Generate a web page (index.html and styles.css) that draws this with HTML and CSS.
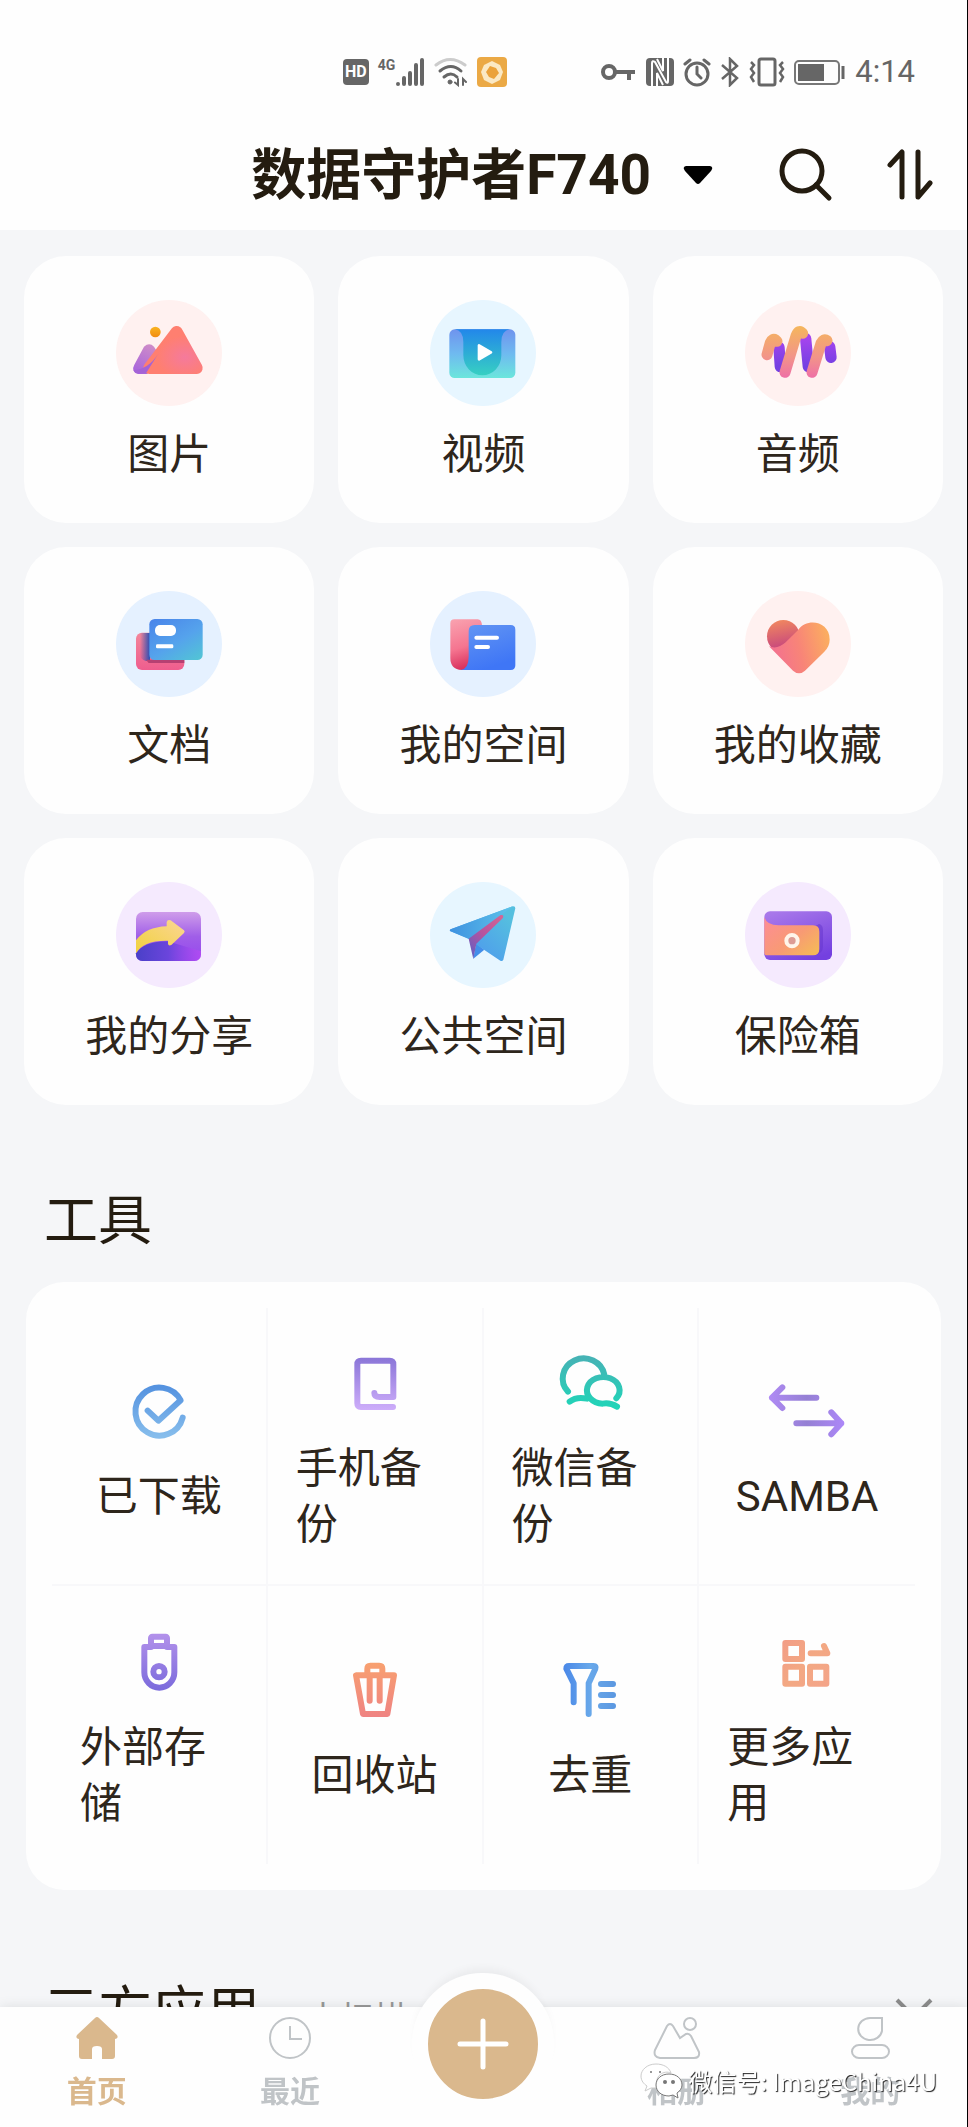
FILE: index.html
```html
<!DOCTYPE html>
<html lang="zh-CN">
<head>
  <meta charset="UTF-8">
  <meta name="viewport" content="width=device-width, initial-scale=1.0">
  <link rel="stylesheet" href="styles.css">
  <title>数据守护者F740</title>
</head>
<body>
<!-- 图标共用的渐变 -->
<svg class="defs" width="0" height="0" aria-hidden="true">
  <defs>
    <linearGradient id="g-blue" gradientUnits="userSpaceOnUse" x1="0" y1="50" x2="0" y2="195"><stop offset="0" stop-color="#5593e0"/><stop offset="1" stop-color="#86bdec"/></linearGradient>
    <linearGradient id="g-phone" gradientUnits="userSpaceOnUse" x1="0" y1="45" x2="0" y2="200"><stop offset="0" stop-color="#8b76d8"/><stop offset="1" stop-color="#cdadfa"/></linearGradient>
    <linearGradient id="g-chat" gradientUnits="userSpaceOnUse" x1="0" y1="45" x2="0" y2="200"><stop offset="0" stop-color="#45b3b5"/><stop offset="1" stop-color="#1fd6b8"/></linearGradient>
    <linearGradient id="g-samba" gradientUnits="userSpaceOnUse" x1="0" y1="0" x2="240" y2="0"><stop offset="0" stop-color="#b18bf6"/><stop offset="0.5" stop-color="#9580d4"/><stop offset="1" stop-color="#ae88fb"/></linearGradient>
    <linearGradient id="g-usb" gradientUnits="userSpaceOnUse" x1="0" y1="40" x2="0" y2="205"><stop offset="0" stop-color="#b190ea"/><stop offset="1" stop-color="#7b6bdc"/></linearGradient>
    <linearGradient id="g-trash" gradientUnits="userSpaceOnUse" x1="0" y1="40" x2="0" y2="200"><stop offset="0" stop-color="#f8a070"/><stop offset="1" stop-color="#ef8382"/></linearGradient>
    <linearGradient id="g-funnel" gradientUnits="userSpaceOnUse" x1="40" y1="0" x2="200" y2="0"><stop offset="0" stop-color="#4a88e8"/><stop offset="0.5" stop-color="#68a8ea"/><stop offset="1" stop-color="#5b97e0"/></linearGradient>
    <linearGradient id="g-apps" gradientUnits="userSpaceOnUse" x1="45" y1="60" x2="190" y2="190"><stop offset="0" stop-color="#f29d86"/><stop offset="0.5" stop-color="#f3a883"/><stop offset="1" stop-color="#f4a489"/></linearGradient>

    <radialGradient id="c-hill" cx="0.75" cy="0.7" r="0.6"><stop offset="0" stop-color="#f57a9c"/><stop offset="1" stop-color="#ff7f70"/></radialGradient>
    <linearGradient id="c-hill2" x1="0.7" y1="0" x2="0.3" y2="1"><stop offset="0" stop-color="#cf8cc8"/><stop offset="1" stop-color="#a865dc"/></linearGradient>
    <linearGradient id="c-sun" x1="0" y1="0" x2="0" y2="1"><stop offset="0" stop-color="#f9b420"/><stop offset="1" stop-color="#f18b12"/></linearGradient>
    <linearGradient id="c-film" x1="0" y1="0" x2="0" y2="1"><stop offset="0" stop-color="#6f93ee"/><stop offset="0.5" stop-color="#6fbaf0"/><stop offset="1" stop-color="#6be6dc"/></linearGradient>
    <linearGradient id="c-film2" x1="0" y1="0" x2="0" y2="1"><stop offset="0" stop-color="#2287ea"/><stop offset="1" stop-color="#37d0c2"/></linearGradient>
    <linearGradient id="c-wave" gradientUnits="userSpaceOnUse" x1="0" y1="78" x2="0" y2="234"><stop offset="0" stop-color="#f5b65c"/><stop offset="0.6" stop-color="#f29489"/><stop offset="1" stop-color="#ee6fa6"/></linearGradient>
    <linearGradient id="c-wave2" x1="0" y1="0" x2="0" y2="1"><stop offset="0" stop-color="#a544ee"/><stop offset="1" stop-color="#7340e2"/></linearGradient>
    <linearGradient id="c-doc" x1="0.1" y1="0" x2="0.9" y2="1"><stop offset="0" stop-color="#4a86ea"/><stop offset="0.55" stop-color="#55a3ec"/><stop offset="1" stop-color="#52c3d6"/></linearGradient>
    <linearGradient id="c-pink" x1="0" y1="0" x2="0" y2="1"><stop offset="0" stop-color="#f3879b"/><stop offset="1" stop-color="#ef5d8e"/></linearGradient>
    <linearGradient id="c-shade" x1="0" y1="0" x2="1" y2="0"><stop offset="0" stop-color="#2b4fa8" stop-opacity="0"/><stop offset="1" stop-color="#2850b8"/></linearGradient>
    <linearGradient id="c-folder" x1="0" y1="0" x2="0.2" y2="1"><stop offset="0" stop-color="#f9a3b0"/><stop offset="0.6" stop-color="#f57590"/><stop offset="1" stop-color="#d9335f"/></linearGradient>
    <linearGradient id="c-folder2" x1="0" y1="0" x2="0.4" y2="1"><stop offset="0" stop-color="#6396f3"/><stop offset="1" stop-color="#3f76f6"/></linearGradient>
    <linearGradient id="c-heart" x1="0" y1="0.6" x2="1" y2="0.4"><stop offset="0" stop-color="#f26f93"/><stop offset="0.5" stop-color="#f88478"/><stop offset="1" stop-color="#fbad60"/></linearGradient>
    <linearGradient id="c-heart2" x1="0.4" y1="0" x2="0.6" y2="1"><stop offset="0" stop-color="#f08660"/><stop offset="0.8" stop-color="#c94a7c"/></linearGradient>
    <linearGradient id="c-share" x1="0" y1="0" x2="0" y2="1"><stop offset="0" stop-color="#cf9dea"/><stop offset="0.5" stop-color="#a05ee8"/><stop offset="1" stop-color="#9647ee"/></linearGradient>
    <linearGradient id="c-share2" x1="0" y1="0" x2="1" y2="0"><stop offset="0" stop-color="#4a40c8"/><stop offset="0.5" stop-color="#6b45dc"/><stop offset="1" stop-color="#b94bf5" stop-opacity="0.7"/></linearGradient>
    <linearGradient id="c-arrow" x1="0" y1="1" x2="1" y2="0"><stop offset="0" stop-color="#f0d23c"/><stop offset="1" stop-color="#fbd595"/></linearGradient>
    <linearGradient id="c-wing" x1="0" y1="0" x2="1" y2="0"><stop offset="0" stop-color="#3f92e0"/><stop offset="1" stop-color="#5ec3ea"/></linearGradient>
    <linearGradient id="c-wing2" x1="0" y1="1" x2="0.9" y2="0.2"><stop offset="0" stop-color="#4b8cf2"/><stop offset="1" stop-color="#55bfdf"/></linearGradient>
    <linearGradient id="c-fold" x1="0" y1="1" x2="1" y2="0"><stop offset="0" stop-color="#5660c8"/><stop offset="0.5" stop-color="#b8539e"/><stop offset="1" stop-color="#d56594"/></linearGradient>
    <linearGradient id="c-safe" x1="0.2" y1="0" x2="0.7" y2="1"><stop offset="0" stop-color="#a878ea"/><stop offset="1" stop-color="#7440e0"/></linearGradient>
    <linearGradient id="c-safe2" x1="0" y1="0" x2="1" y2="0.8"><stop offset="0" stop-color="#fd8d96"/><stop offset="0.6" stop-color="#f89a74"/><stop offset="1" stop-color="#f5b75a"/></linearGradient>
  </defs>
</svg>

<div class="app">
  <header class="top">
    <!-- 状态栏 -->
    <div class="status">
      <div class="status-left">
        <span class="hd">HD</span>
        <span class="net">4G</span>
        <svg width="30" height="30" viewBox="0 0 30 30" stroke="#666" stroke-width="4" stroke-linecap="round"><path d="M3 27v0M9 21v6M15 16v11M21 8v19M27 3v24"/></svg>
        <svg width="34" height="30" viewBox="0 0 34 30" fill="none" stroke="#666" stroke-width="3" stroke-linecap="round"><path d="M2 8Q16-3 31 8" stroke="#ccc"/><path d="M6 14Q17 5 27 14M10 20Q17 14 23 20"/><circle cx="16" cy="25" r="2" fill="#666" stroke-width="1"/><path d="M24 22v6l-3-2.500M29 28v-6l3 3" stroke-width="2"/></svg>
        <svg width="30" height="30" viewBox="0 0 30 30"><rect width="30" height="30" rx="4" fill="#eba945"/><path d="M15 4l8 4 3 7-3 8-8 4-8-4-3-8 3-7z" fill="#fbe9c4"/><path d="M13 9l6 2 3 5-5 6-5-2-3-5z" fill="#eba23a"/></svg>
      </div>
      <div class="status-right">
        <svg width="36" height="30" viewBox="0 0 36 30" fill="none" stroke="#666" stroke-width="4"><circle cx="8" cy="15" r="6"/><path d="M14 15h20M28 15v8"/></svg>
        <svg width="28" height="30" viewBox="0 0 28 30"><rect y="1" width="28" height="28" rx="4" fill="#666"/><path d="M6 29V6q0-3 3-1l11 20q2 2 2-1V1" fill="none" stroke="#fff" stroke-width="2"/><path d="M11 29V16l6 12M17 1v13L11 2" fill="none" stroke="#fff" stroke-width="2"/></svg>
        <svg width="28" height="30" viewBox="0 0 28 30" fill="none" stroke="#666" stroke-width="3" stroke-linecap="round"><circle cx="14" cy="17" r="11"/><path d="M14 10v7l4 4M2 7l5-4M21 3l5 4"/></svg>
        <svg width="20" height="30" viewBox="0 0 20 30" fill="none" stroke="#666" stroke-width="2.500"><path d="M2 8l15 13-7 7V2l7 7L2 22"/></svg>
        <svg width="36" height="30" viewBox="0 0 36 30" fill="none" stroke="#666" stroke-width="3"><rect x="10" y="2" width="16" height="26" rx="2"/><path d="M2 5l3 3-3 4 3 4-3 4 3 5M34 5l-3 3 3 4-3 4 3 4-3 5" stroke-width="2.500"/></svg>
        <svg width="52" height="30" viewBox="0 0 52 30"><rect x="1" y="4" width="44" height="23" rx="4" fill="none" stroke="#777" stroke-width="2"/><rect x="4" y="7" width="26" height="17" fill="#666"/><path d="M49 9v13" stroke="#666" stroke-width="3"/></svg>
        <span class="time">4:14</span>
      </div>
    </div>
    <!-- 标题栏 -->
    <div class="bar">
      <h1><button class="device" type="button">数据守护者F740
        <svg width="30" height="20" viewBox="0 0 30 20" aria-hidden="true"><path d="M3 1h24q4 1 1 5L17 18q-2 2-4 0L2 6q-3-4 1-5z" fill="#000"/></svg></button></h1>
      <button class="icon-btn" type="button" aria-label="搜索"><svg width="54" height="54" viewBox="0 0 54 54" fill="none" stroke="#241c10" stroke-width="5" stroke-linecap="round"><circle cx="23" cy="23" r="20"/><path d="M37 37l13 13"/></svg></button>
      <button class="icon-btn" type="button" aria-label="排序"><svg width="46" height="54" viewBox="0 0 46 54" fill="none" stroke="#241c10" stroke-width="5" stroke-linecap="round" stroke-linejoin="round"><path d="M3 17L15 4v45M31 4v45l12-14"/></svg></button>
    </div>
  </header>

  <main class="content">
    <!-- 九宫格分类 -->
    <nav class="cards" aria-label="分类">
      <a class="card" href="#pictures"><span class="round pink"><svg viewBox="0 0 318 318"><path d="M84 140q16-14 30 0l14 22-34 60H66q-22-8-11-28z" fill="url(#c-hill2)"/><path d="M182 96L242 204H100z" fill="url(#c-hill)" stroke="url(#c-hill)" stroke-width="36" stroke-linejoin="round"/><path d="M128 160L90 220H64q-8 0-12-10 44 0 76-50z" fill="#a463d6"/><circle cx="118" cy="96" r="16" fill="url(#c-sun)"/></svg></span>图片</a>
      <a class="card" href="#videos"><span class="round sky"><svg viewBox="0 0 318 318"><rect x="58" y="88" width="198" height="146" rx="16" fill="url(#c-film)"/><path d="M74 88H240q-26 4-26 38v40a57 60 0 0 1-114 0v-40q0-34-26-38z" fill="url(#c-film2)"/><path d="M147 136v42l36-21z" fill="#fff" stroke="#fff" stroke-width="8" stroke-linejoin="round"/></svg></span>视频</a>
      <a class="card" href="#audio"><span class="round pink"><svg viewBox="0 0 318 318" fill="none" stroke-linecap="round"><path d="M102 142L106 200M182 116L190 200M254 140L258 172" stroke="url(#c-wave2)" stroke-width="34"/><path d="M66 164L76 128q6-14 16-8l4 4M120 217L153 108q8-22 20-8M201 217L228 130q8-16 18-8" stroke="url(#c-wave)" stroke-width="33"/></svg></span>音频</a>
      <a class="card" href="#docs"><span class="round blue"><svg viewBox="0 0 318 318"><rect x="60" y="125" width="145" height="112" rx="18" fill="url(#c-pink)"/><path d="M72 126h30v84H90q-18-4-18-20z" fill="url(#c-shade)"/><path d="M90 206h115v10H98z" fill="#b64072"/><rect x="100" y="84" width="160" height="123" rx="16" fill="url(#c-doc)"/><rect x="117" y="102" width="63" height="33" rx="15" fill="#fff"/><rect x="120" y="160" width="52" height="12" rx="4" fill="#fff"/></svg></span>文档</a>
      <a class="card" href="#space"><span class="round blue"><svg viewBox="0 0 318 318"><path d="M73 85h70q12 0 13 18v84l-44 50H95q-34-2-34-36V97q0-12 12-12z" fill="url(#c-folder)"/><path d="M134 102H242q14 0 14 14V223q0 14-14 14H92q24-4 24-40v-77q0-18 18-18z" fill="url(#c-folder2)"/><path d="M139 140h62M139 168h35" stroke="#fff" stroke-width="12" stroke-linecap="round"/></svg></span>我的空间</a>
      <a class="card" href="#favorites"><span class="round pink"><svg viewBox="0 0 318 318"><circle cx="115" cy="136" r="49" fill="url(#c-heart2)"/><path d="M72 166q26 10 50-12l38-38c26-36 94-26 94 30q0 20-16 36l-58 57q-18 16-36 0z" fill="url(#c-heart)"/></svg></span>我的收藏</a>
      <a class="card" href="#share"><span class="round purple"><svg viewBox="0 0 318 318"><rect x="60" y="90" width="195" height="147" rx="20" fill="url(#c-share)"/><path d="M60 214q24-36 95-36l100 30v9q0 20-20 20H80q-20 0-20-20z" fill="url(#c-share2)"/><path d="M60 175q30-40 92-42v-12q2-10 12-6l40 30q4 4 0 8l-38 36q-9 4-10-4v-9q-74-2-96 38z" fill="url(#c-arrow)"/></svg></span>我的分享</a>
      <a class="card" href="#public"><span class="round sky"><svg viewBox="0 0 318 318"><path d="M130 230L163 203 138 184z" fill="#438ee9"/><path d="M60 147Q58 143 64 141L248 73q8-1 8 6l-36 154q-3 6-9 3l-78-52-15-14z" fill="url(#c-wing2)"/><path d="M60 147Q58 143 64 141L248 73 118 172z" fill="url(#c-wing)"/><path d="M116 170L212 99q12-2 6 10l-79 76-9 46z" fill="url(#c-fold)"/></svg></span>公共空间</a>
      <a class="card" href="#safe"><span class="round purple"><svg viewBox="0 0 318 318"><rect x="58" y="88" width="203" height="146" rx="17" fill="url(#c-safe)"/><path d="M58 218h150q26 0 26-26v-46q0-18-12-20" fill="#6434cc" opacity="0.5"/><path d="M58 106q8 24 42 24h104q19 0 19 19v52q0 19-19 19H66q-8 0-8-8z" fill="url(#c-safe2)"/><circle cx="141" cy="176" r="17" fill="#dd9c94" stroke="#fff5ea" stroke-width="12"/></svg></span>保险箱</a>
    </nav>

    <!-- 工具 -->
    <h2 class="section-title">工具</h2>
    <nav class="tools" aria-label="工具">
      <a class="tool" href="#downloaded"><svg viewBox="0 0 240 240" stroke="url(#g-blue)"><path d="M191 140A72 72 0 1 1 185 88L118 149 86 119"/></svg><span>已下载</span></a>
      <a class="tool" href="#phone"><svg viewBox="0 0 240 240" stroke="url(#g-phone)"><path d="M174 192H78q-11 0-11-11V64q0-11 11-11h86q11 0 11 11v98h-41q-16 0-16-12"/></svg><span>手机备份</span></a>
      <a class="tool" href="#wechat"><svg viewBox="0 0 240 240" stroke="url(#g-chat)"><path d="M54 146A63 60 0 1 1 163 95M59 176q20-16 52-9M199 166A49 40 0 1 0 158 182q22-4 43 9"/></svg><span>微信备份</span></a>
      <a class="tool" href="#samba"><svg viewBox="0 0 240 240" stroke="url(#g-samba)"><path d="M15 80H148M46 49L15 80l31 31M88 157H223M193 124l30 33-30 33"/></svg><span>SAMBA</span></a>
      <a class="tool" href="#storage"><svg viewBox="0 0 240 240" stroke="url(#g-usb)"><rect x="96" y="44" width="48" height="28" rx="4"/><path d="M96 75H76v76a45 46 0 0 0 90 0V75h-22"/><circle cx="120" cy="149" r="17"/></svg><span>外部存储</span></a>
      <a class="tool" href="#trash"><svg viewBox="0 0 240 240" stroke="url(#g-trash)"><path d="M97 74V56q0-9 9-9h27q9 0 9 9v18M63 76H177L157 192H84zM104 76v76M134 76v76"/></svg><span>回收站</span></a>
      <a class="tool" href="#dedupe"><svg viewBox="0 0 240 240" stroke="url(#g-funnel)"><path d="M71 157V100L49 56q0-8 8-8h74q8 0 5 8L116 100v92M153 102h36M153 135h36M153 168h36"/></svg><span>去重</span></a>
      <a class="tool" href="#apps"><svg viewBox="0 0 240 240" stroke="url(#g-apps)"><path d="M55 63h50v48H55zM55 134h50v51H55zM129 134h49v51h-49z"/><path d="M131 94h50L171 72"/></svg><span>更多应用</span></a>
    </nav>

    <!-- 三方应用 -->
    <div class="third">
      <h2 class="section-title">三方应用</h2>
      <span class="hint">未扫描</span>
      <button class="icon-btn more" type="button" aria-label="展开"><svg width="38" height="24" viewBox="0 0 38 24" fill="none" stroke="#8c8c8c" stroke-width="4"><path d="M2 3l17 17L36 3"/></svg></button>
    </div>
  </main>

  <!-- 底部导航 -->
  <nav class="tabs" aria-label="底部导航">
    <a class="tab active" href="#home"><svg width="44" height="44" viewBox="0 0 44 44"><path d="M20 2q2-2 4 0l18 17q2 3-2 4v17q0 3-3 3H27V33q0-3-5-3t-5 3v10H7q-3 0-3-3V23q-4-1-2-4z"/></svg>首页</a>
    <a class="tab" href="#recent"><svg width="44" height="44" viewBox="0 0 44 44"><circle cx="22" cy="22" r="20"/><path d="M22 10v13h12"/></svg>最近</a>
    <div class="tab-add"><button class="add" type="button" aria-label="添加"><svg width="56" height="56" viewBox="0 0 56 56" stroke="#fff" stroke-width="5" stroke-linecap="round"><path d="M28 5v46M5 28h46"/></svg></button></div>
    <a class="tab" href="#album"><svg width="48" height="44" viewBox="0 0 48 44"><path d="M7 42q-7-1-5-8L14 10q3-4 6 0l7 12 6-4q3-1 5 2l8 16q1 6-5 6z"/><circle cx="37" cy="8" r="6"/></svg>相册</a>
    <a class="tab" href="#mine"><svg width="44" height="44" viewBox="0 0 44 44"><path d="M34 2v13a12 11 0 1 1-12-13z"/><rect x="4" y="29" width="37" height="13" rx="7"/></svg>我的</a>
    <div class="watermark">
      <svg width="44" height="36" viewBox="0 0 44 36"><path d="M16 1c-9 0-15 6-15 12 0 5 3 8 6 10l-2 5 6-3h6C14 12 24 7 31 10 29 4 23 1 16 1z" fill="#fff" stroke="#ccc"/><path d="M29 11c-8 0-13 5-13 11s5 11 13 11l4-1 5 3-1-5c3-2 5-5 5-8 0-6-5-11-13-11z" fill="#fff" stroke="#777"/><g fill="#777"><circle cx="25" cy="19" r="2"/><circle cx="33" cy="19" r="2"/><circle cx="11" cy="9" r="1"/><circle cx="20" cy="9" r="1"/></g></svg>
      <span>微信号: ImageChina4U</span>
    </div>
  </nav>
</div>
</body>
</html>
```
FILE: styles.css
```css
* {
  box-sizing: border-box;
}

body {
  margin: 0;
  background-color: #f5f6f8;
  color: #2e261c;
  font-family: Roboto, "Noto Sans CJK SC", sans-serif;
}

a {
  color: inherit;
  text-decoration: none;
}

button {
  padding: 0;
  border: 0;
  background: none;
  color: inherit;
  font: inherit;
}

svg {
  display: block;
  flex: none;
}

.defs {
  position: absolute;
}

.app {
  min-height: 100vh;
  border-right: 1px solid #000;
}

/* 顶部 */
.top {
  height: 230px;
  padding: 57px 34px 0 0;
  background-color: #fefefe;
}

.status {
  display: flex;
  justify-content: flex-end;
  align-items: center;
  gap: 94px;
  height: 30px;
  padding-right: 18px;
  color: #666;
}

.status-left,
.status-right {
  display: flex;
  align-items: center;
  gap: 9px;
}

.hd {
  padding: 0 2px;
  border-radius: 4px;
  background-color: #666;
  color: #fff;
  font-size: 16px;
  font-weight: 700;
  line-height: 26px;
}

.net {
  align-self: flex-start;
  margin-right: -9px;
  font-size: 14px;
  font-weight: 700;
  line-height: 16px;
}

.time {
  font-size: 31px;
  line-height: 30px;
}

.bar {
  display: flex;
  justify-content: flex-end;
  align-items: center;
  gap: 54px;
  height: 80px;
  margin-top: 48px;
  color: #241c10;
}

h1,
h2 {
  margin: 0;
}

.device {
  display: flex;
  align-items: center;
  gap: 32px;
  margin-right: 12px;
  font-size: 55px;
  font-weight: 700;
  line-height: 80px;
}

/* 内容 */
.content {
  padding: 26px 24px 0;
}

.cards {
  display: grid;
  grid-template-columns: repeat(3, 1fr);
  gap: 24px;
}

.card {
  display: flex;
  flex-direction: column;
  align-items: center;
  gap: 19px;
  height: 267px;
  padding-top: 44px;
  border-radius: 42px;
  background-color: #fefefe;
  font-size: 42px;
  line-height: 60px;
}

.round {
  width: 106px;
  height: 106px;
  border-radius: 50%;
}

.pink { background-color: #fff1f0; }
.sky { background-color: #e7f6ff; }
.blue { background-color: #e5f1ff; }
.purple { background-color: #f5eafe; }

.section-title {
  margin-top: 82px;
  padding-left: 20px;
  color: #241c10;
  font-size: 54px;
  font-weight: 400;
  line-height: 70px;
}

.tools {
  display: grid;
  grid-template-columns: repeat(4, 1fr);
  grid-template-rows: repeat(2, 278px);
  margin: 25px 2px 0;
  padding: 26px;
  border-radius: 38px;
  background-color: #fefefe;
}

.tool {
  display: flex;
  flex-direction: column;
  align-items: center;
  justify-content: center;
  gap: 18px;
  padding: 4px 28px 0;
  border-right: 2px solid #f8f8fa;
  font-size: 42px;
  line-height: 56px;
}

.tool:nth-child(4n) {
  border-right: 0;
}

.tool:nth-child(-n+4) {
  border-bottom: 2px solid #f8f8fa;
}

.tool svg {
  width: 80px;
  height: 80px;
  fill: none;
  stroke-width: 18px;
  stroke-linecap: round;
  stroke-linejoin: round;
}

.third {
  display: flex;
  align-items: flex-start;
  gap: 46px;
  height: 70px;
  margin-top: 88px;
  padding-right: 10px;
}

.third .section-title {
  margin-top: 0;
}

.hint {
  padding-top: 16px;
  color: #999;
  font-size: 34px;
  line-height: 50px;
}

.more {
  margin-left: auto;
  padding-top: 19px;
}

/* 底部导航 */
.tabs {
  position: fixed;
  right: 1px;
  bottom: 0;
  left: 0;
  display: grid;
  grid-template-columns: repeat(5, 1fr);
  height: 120px;
  background-color: #fefefe;
  box-shadow: 0 0 12px rgba(0, 0, 0, 0.1);
}

.tab {
  display: flex;
  flex-direction: column;
  align-items: center;
  gap: 12px;
  padding-top: 9px;
  color: #c0c4c7;
  font-size: 30px;
  font-weight: 700;
  line-height: 40px;
}

.tab svg {
  fill: none;
  stroke: #c0c4c7;
  stroke-width: 2px;
}

.tab.active {
  color: #dab88d;
}

.tab.active svg {
  fill: #dab88d;
  stroke: none;
}

.tab-add {
  display: flex;
  justify-content: center;
  align-items: flex-start;
}

/* 凸起的圆形按钮 */
.add {
  display: flex;
  justify-content: center;
  align-items: center;
  width: 142px;
  height: 142px;
  margin-top: -34px;
  border: 16px solid #fefefe;
  border-radius: 50%;
  background-color: #dab88d;
  box-shadow: 0 -8px 10px -4px rgba(0, 0, 0, 0.05);
}

.watermark {
  position: absolute;
  right: 30px;
  bottom: 26px;
  display: flex;
  align-items: center;
  gap: 4px;
  color: #fff;
  font-family: "Noto Sans CJK SC", sans-serif;
  font-size: 24px;
  line-height: 40px;
  text-shadow: 1px 1px 1px #222;
}
```
